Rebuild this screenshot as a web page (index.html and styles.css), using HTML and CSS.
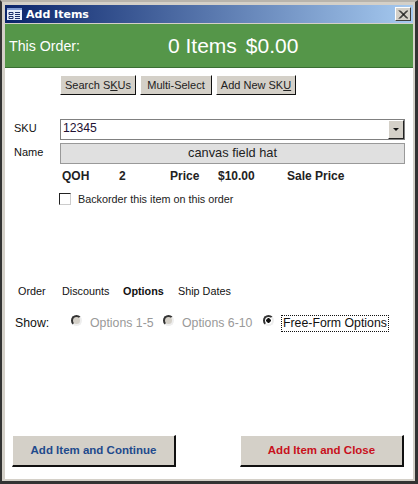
FILE: index.html
```html
<!DOCTYPE html>
<html lang="en">
<head>
    <meta charset="UTF-8">
    <meta name="viewport" content="width=device-width, initial-scale=1.0">
    <title>Add Items</title>
    <link rel="stylesheet" href="styles.css">
</head>
<body>

<div class="window">
    <div class="titlebar">
        <svg class="title-icon" width="15" height="12" viewBox="0 0 15 12">
            <rect x="0" y="0" width="15" height="12" fill="#e8eefa"/>
            <rect x="0" y="0" width="15" height="2" fill="#7f9bd2"/>
            <path d="M2 4.5h4v2h-4zM2 8.5h4v2h-4zM8 4.5h5M8 6.5h5M8 8.5h5M8 10.5h5" stroke="#1c2f6b" fill="none"/>
        </svg>
        <span class="title-text">Add Items</span>
        <div class="close-btn">
            <svg width="10" height="9" viewBox="0 0 10 9">
                <path d="M1 0.5L9 8.5M2 0.5L10 8.5M9 0.5L1 8.5M10 0.5L2 8.5" stroke="#111" fill="none"/>
            </svg>
        </div>
    </div>

    <div class="window-body">
        <div class="order-bar">
            <div class="order-label">This Order:</div>
            <div class="order-total"><span>0 Items</span><span>$0.00</span></div>
        </div>

        <div class="sku-buttons">
            <div class="btn btn-search">Search S<u>K</u>Us</div>
            <div class="btn btn-multi">Multi-Select</div>
            <div class="btn btn-new">Add New SK<u>U</u></div>
        </div>

        <div class="field-row sku-row">
            <label class="field-label">SKU</label>
            <div class="combo">
                <div class="combo-value">12345</div>
                <div class="combo-arrow"><span class="arrow"></span></div>
            </div>
        </div>
        <div class="field-row name-row">
            <label class="field-label">Name</label>
            <div class="name-value">canvas field hat</div>
        </div>

        <div class="stats">
            <span class="stat-qoh">QOH</span>
            <span class="stat-qty">2</span>
            <span class="stat-price">Price</span>
            <span class="stat-amt">$10.00</span>
            <span>Sale Price</span>
        </div>

        <div class="backorder">
            <span class="checkbox"></span>
            <span>Backorder this item on this order</span>
        </div>

        <div class="tabs">
            <span class="tab-order">Order</span>
            <span class="tab-disc">Discounts</span>
            <span class="tab-opt">Options</span>
            <span>Ship Dates</span>
        </div>

        <div class="show-row">
            <span class="show-label">Show:</span>
            <span class="radio"></span>
            <span class="radio-text text-1">Options 1-5</span>
            <span class="radio"></span>
            <span class="radio-text text-2">Options 6-10</span>
            <span class="radio radio-on"></span>
            <span class="radio-focus">Free-Form Options</span>
        </div>

        <div class="footer">
            <div class="big-btn btn-continue">Add Item and Continue</div>
            <div class="big-btn btn-close">Add Item and Close</div>
        </div>
    </div>
</div>

</body>
</html>
```

FILE: styles.css
```css
* {
    box-sizing: border-box;
}
body {
    margin: 0;
    font-family: "Liberation Sans", Arial, sans-serif;
    color: #111;
    background-color: #fff;
}
.window {
    width: 418px;
    height: 484px;
    background-color: #d4d0c8;
    border-style: solid;
    border-width: 2px 3px 3px 2px;
    border-color: #b8b4ac #333 #333 #333;
    padding: 3px 2px 2px 3px;
    display: flex;
    flex-direction: column;
}
.titlebar {
    height: 19px;
    flex: none;
    display: flex;
    align-items: center;
    padding: 0 2px;
    background: linear-gradient(to right, #0a246a, #a6caf0);
    border-bottom: 1px solid #d4d0c8;
}
.title-icon {
    margin-right: 4px;
}
.title-text {
    font-family: "DejaVu Sans", sans-serif;
    font-weight: bold;
    font-size: 11px;
    color: #fff;
    flex: 1;
}
.close-btn {
    width: 16px;
    height: 14px;
    background-color: #d4d0c8;
    border: 1px solid;
    border-color: #fff #404040 #404040 #fff;
    display: flex;
    align-items: center;
    justify-content: center;
}
.window-body {
    flex: 1;
    background-color: #fff;
    display: flex;
    flex-direction: column;
}
.order-bar {
    height: 44px;
    flex: none;
    background-color: #559649;
    border-bottom: 1px solid #3a6f33;
    color: #fff;
    display: flex;
    align-items: center;
}
.order-label {
    font-size: 14.2px;
    margin-left: 4px;
    width: 159px;
}
.order-total {
    font-size: 21px;
    display: flex;
    gap: 9px;
}
.sku-buttons {
    display: flex;
    margin: 7px 0 0 55px;
    gap: 4px;
}
.btn {
    height: 20px;
    font-size: 11px;
    color: #222;
    display: flex;
    align-items: center;
    justify-content: center;
    background-color: #d4d0c8;
    border: 1px solid;
    border-color: #fff #111 #111 #fff;
    white-space: pre;
}
.btn-search {
    width: 76px;
}
.btn-multi {
    width: 72px;
}
.btn-new {
    width: 80px;
}
.field-row {
    display: flex;
    margin-right: 8px;
}
.sku-row {
    margin-top: 24px;
}
.name-row {
    margin-top: 3px;
}
.field-label {
    width: 55px;
    padding-left: 9px;
    font-size: 11px;
    padding-top: 3px;
}
.combo {
    flex: 1;
    height: 21px;
    border: 1px solid #808080;
    display: flex;
    background-color: #fff;
}
.combo-value {
    flex: 1;
    font-size: 12.2px;
    padding-left: 2px;
    line-height: 17px;
    color: #221133;
}
.combo-arrow {
    width: 16px;
    background-color: #d4d0c8;
    border: 1px solid;
    border-color: #fff #222 #222 #fff;
    display: flex;
    align-items: center;
    justify-content: center;
}
.arrow {
    width: 0;
    height: 0;
    border-left: 3px solid transparent;
    border-right: 3px solid transparent;
    border-top: 3px solid #111;
}
.name-value {
    flex: 1;
    height: 21px;
    border: 1px solid #999;
    background-color: #e0e0e0;
    text-align: center;
    font-size: 12.8px;
    line-height: 18px;
    color: #222;
}
.stats {
    display: flex;
    margin: 5px 0 0 57px;
    font-size: 12px;
    font-weight: bold;
    line-height: 15px;
    color: #222;
}
.stat-qoh {
    width: 57px;
}
.stat-qty {
    width: 51px;
}
.stat-price {
    width: 48px;
}
.stat-amt {
    width: 69px;
}
.backorder {
    display: flex;
    align-items: center;
    margin: 9px 0 0 54px;
    font-size: 10.8px;
    color: #222;
}
.checkbox {
    width: 12px;
    height: 12px;
    border: 1px solid;
    border-color: #222 #ccc #ccc #222;
    margin-right: 7px;
}
.tabs {
    display: flex;
    margin: 79px 0 0 13px;
    font-size: 10.8px;
    line-height: 14px;
}
.tab-order {
    width: 44px;
}
.tab-disc {
    width: 61px;
}
.tab-opt {
    width: 55px;
    font-weight: bold;
}
.show-row {
    display: flex;
    align-items: center;
    margin: 16px 0 0 10px;
    font-size: 12.3px;
    height: 18px;
}
.show-label {
    width: 56px;
}
.radio {
    width: 11px;
    height: 11px;
    border-radius: 50%;
    background-color: #d4d0c8;
    border: 2px solid;
    border-color: #333 #eee #eee #333;
    margin-top: -5px;
    margin-right: 8px;
}
.radio-on {
    background: radial-gradient(circle, #111 2px, #fff 2.5px);
    margin-right: 7px;
}
.radio-text {
    color: #999;
}
.text-1 {
    width: 73px;
}
.text-2 {
    width: 81px;
}
.radio-focus {
    border: 1px dotted #111;
    padding: 0 1px;
    line-height: 15px;
}
.footer {
    margin-top: auto;
    margin-bottom: 12px;
    padding: 0 9px 0 7px;
    display: flex;
    justify-content: space-between;
}
.big-btn {
    height: 32px;
    padding-bottom: 2px;
    background-color: #d4d0c8;
    border: 1px solid;
    border-color: #fff #111 #111 #fff;
    border-width: 1px 2px 2px 1px;
    display: flex;
    align-items: center;
    justify-content: center;
    font-size: 11.5px;
    font-weight: bold;
}
.btn-continue {
    width: 164px;
    color: #1f4a8c;
}
.btn-close {
    width: 164px;
    color: #c8101c;
}
```
